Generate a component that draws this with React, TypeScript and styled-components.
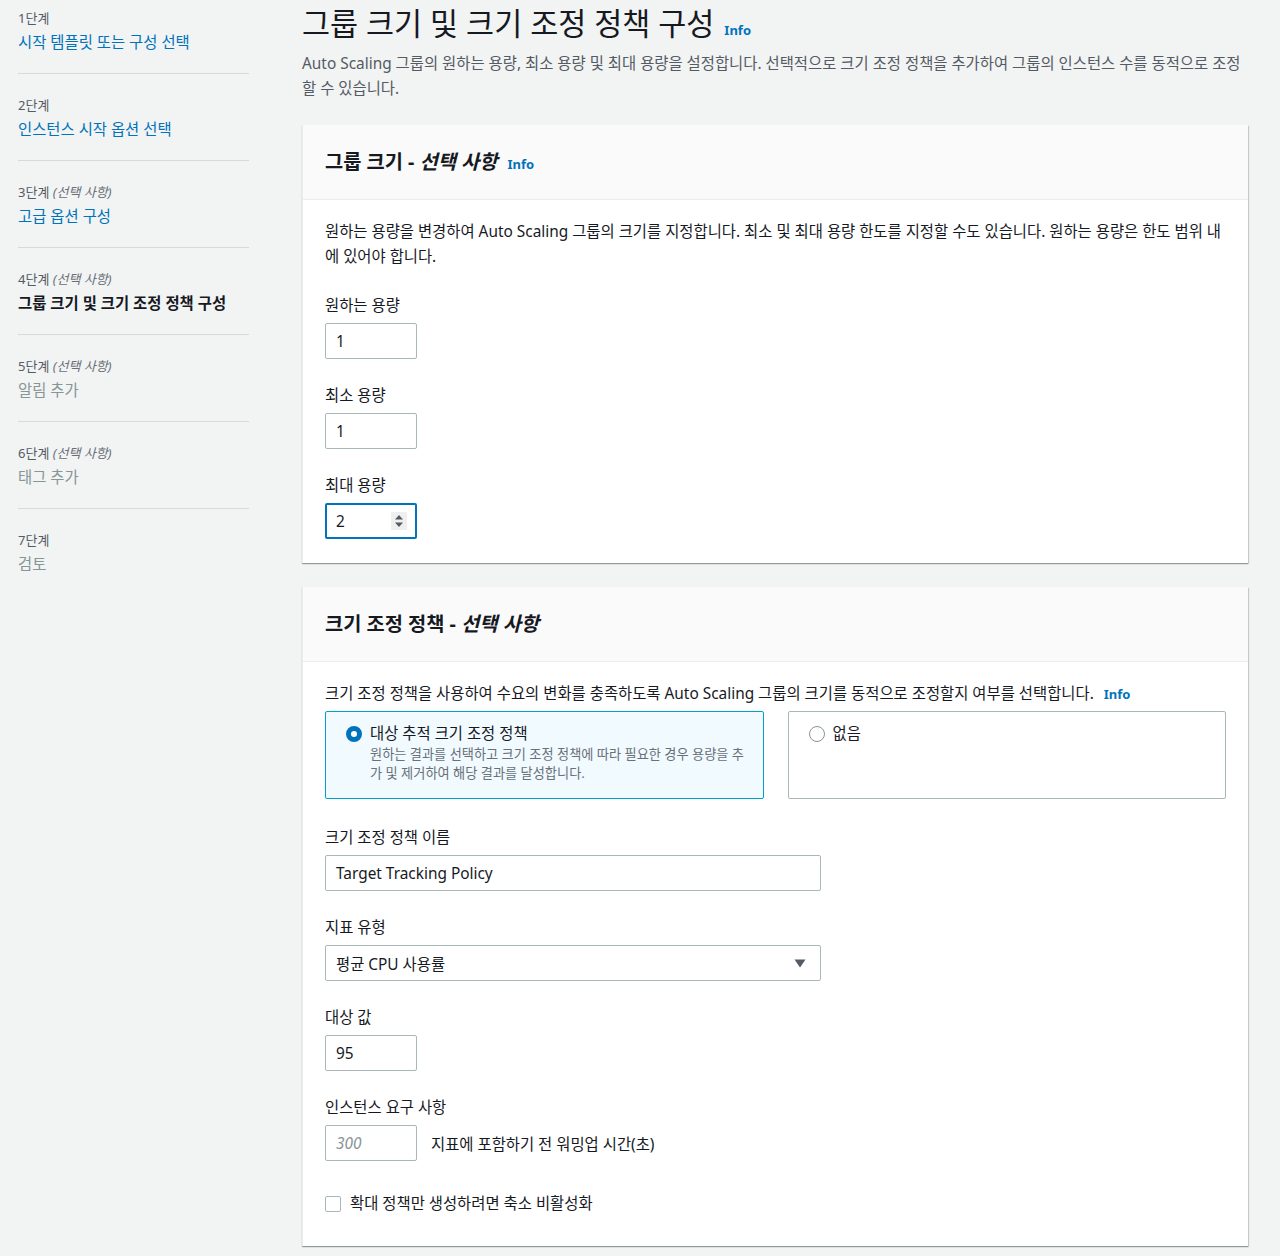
import styled, { createGlobalStyle } from 'styled-components';

const GlobalStyle = createGlobalStyle`
  body {
    margin: 0;
    background: #f2f3f3;
    font-family: "Noto Sans", "Noto Sans CJK KR", sans-serif;
    color: #16191f;
  }
`;

type Step = {
  num: string;
  optional?: boolean;
  title: string;
  state: 'link' | 'current' | 'disabled';
};

const steps: Step[] = [
  { num: '1단계', title: '시작 템플릿 또는 구성 선택', state: 'link' },
  { num: '2단계', title: '인스턴스 시작 옵션 선택', state: 'link' },
  { num: '3단계', optional: true, title: '고급 옵션 구성', state: 'link' },
  { num: '4단계', optional: true, title: '그룹 크기 및 크기 조정 정책 구성', state: 'current' },
  { num: '5단계', optional: true, title: '알림 추가', state: 'disabled' },
  { num: '6단계', optional: true, title: '태그 추가', state: 'disabled' },
  { num: '7단계', title: '검토', state: 'disabled' },
];

function SpinnerIcon() {
  return (
    <Spinner>
      <svg width="10" height="14" viewBox="0 0 10 14">
        <path d="M5 1 L9 5.5 H1 Z" fill="#545b64" />
        <path d="M5 13 L9 8.5 H1 Z" fill="#545b64" />
      </svg>
    </Spinner>
  );
}

function App() {
  return (
    <>
      <GlobalStyle />
      <Layout>
        <Sidebar>
          {steps.map((s, i) => (
            <StepItem key={s.num} last={i === steps.length - 1}>
              <StepNum>
                {s.num}
                {s.optional && <em> (선택 사항)</em>}
              </StepNum>
              <StepTitle state={s.state}>{s.title}</StepTitle>
            </StepItem>
          ))}
        </Sidebar>

        <Main>
          <TitleRow>
            <PageTitle>그룹 크기 및 크기 조정 정책 구성</PageTitle>
            <Info>Info</Info>
          </TitleRow>
          <PageDesc>
            Auto Scaling 그룹의 원하는 용량, 최소 용량 및 최대 용량을 설정합니다. 선택적으로 크기 조정 정책을 추가하여 그룹의 인스턴스 수를 동적으로 조정할 수 있습니다.
          </PageDesc>

          <Panel>
            <PanelHeader>
              <PanelTitle>
                그룹 크기 - <em>선택 사항</em>
              </PanelTitle>
              <Info>Info</Info>
            </PanelHeader>
            <PanelBody>
              <BodyText>
                원하는 용량을 변경하여 Auto Scaling 그룹의 크기를 지정합니다. 최소 및 최대 용량 한도를 지정할 수도 있습니다. 원하는 용량은 한도 범위 내에 있어야 합니다.
              </BodyText>
              <Field>
                <Label>원하는 용량</Label>
                <InputBox width={92}>1</InputBox>
              </Field>
              <Field>
                <Label>최소 용량</Label>
                <InputBox width={92}>1</InputBox>
              </Field>
              <Field>
                <Label>최대 용량</Label>
                <InputBox width={92} focused>
                  <span>2</span>
                  <SpinnerIcon />
                </InputBox>
              </Field>
            </PanelBody>
          </Panel>

          <Panel>
            <PanelHeader>
              <PanelTitle>
                크기 조정 정책 - <em>선택 사항</em>
              </PanelTitle>
            </PanelHeader>
            <PanelBody>
              <div>
                <BodyText>
                  크기 조정 정책을 사용하여 수요의 변화를 충족하도록 Auto Scaling 그룹의 크기를 동적으로 조정할지 여부를 선택합니다.
                  <Info inline>Info</Info>
                </BodyText>
                <Tiles>
                  <Tile selected>
                    <Radio checked />
                    <TileText>
                      <TileLabel>대상 추적 크기 조정 정책</TileLabel>
                      <TileDesc>
                        원하는 결과를 선택하고 크기 조정 정책에 따라 필요한 경우 용량을 추가 및 제거하여 해당 결과를 달성합니다.
                      </TileDesc>
                    </TileText>
                  </Tile>
                  <Tile>
                    <Radio />
                    <TileText>
                      <TileLabel>없음</TileLabel>
                    </TileText>
                  </Tile>
                </Tiles>
              </div>
              <Field spaced>
                <Label>크기 조정 정책 이름</Label>
                <InputBox width={496}>Target Tracking Policy</InputBox>
              </Field>
              <Field>
                <Label>지표 유형</Label>
                <InputBox width={496} select>
                  <span>평균 CPU 사용률</span>
                  <svg width="12" height="9" viewBox="0 0 12 9">
                    <path d="M0.5 0.5 H11.5 L6 8.5 Z" fill="#545b64" />
                  </svg>
                </InputBox>
              </Field>
              <Field>
                <Label>대상 값</Label>
                <InputBox width={92}>95</InputBox>
              </Field>
              <Field>
                <Label>인스턴스 요구 사항</Label>
                <InlineRow>
                  <InputBox width={92}>
                    <Placeholder>300</Placeholder>
                  </InputBox>
                  <InlineText>지표에 포함하기 전 워밍업 시간(초)</InlineText>
                </InlineRow>
              </Field>
              <CheckRow>
                <CheckBox />
                <span>확대 정책만 생성하려면 축소 비활성화</span>
              </CheckRow>
            </PanelBody>
          </Panel>
        </Main>
      </Layout>
    </>
  );
}

export default App;

const Layout = styled.div`
  display: flex;
  align-items: flex-start;
  padding: 0 32px 0 18px;
`;

const Sidebar = styled.nav`
  width: 231px;
  flex-shrink: 0;
  padding-top: 10px;
  margin-right: 53px;
`;

const StepItem = styled.div<{ last?: boolean }>`
  padding: 0 0 19px;
  margin-bottom: 23px;
  border-bottom: ${(p) => (p.last ? 'none' : '1px solid #d5dbdb')};
`;

const StepNum = styled.div`
  font-size: 13px;
  line-height: 17px;
  color: #545b64;
  em {
    font-style: italic;
    color: #687078;
  }
`;

const StepTitle = styled.div<{ state: Step['state'] }>`
  margin-top: 5px;
  font-size: 15.4px;
  line-height: 22px;
  font-weight: ${(p) => (p.state === 'current' ? 700 : 400)};
  color: ${(p) =>
    p.state === 'link' ? '#0073bb' : p.state === 'current' ? '#16191f' : '#879596'};
`;

const Main = styled.main`
  flex: 1;
  min-width: 0;
  padding-bottom: 40px;
`;

const TitleRow = styled.div`
  display: flex;
  align-items: baseline;
  gap: 10px;
  margin-top: 5px;
`;

const PageTitle = styled.h1`
  margin: 0;
  font-size: 30.5px;
  line-height: 36px;
  font-weight: 400;
  color: #16191f;
`;

const Info = styled.a<{ inline?: boolean }>`
  font-size: 13px;
  font-weight: 700;
  color: #0073bb;
  margin-left: ${(p) => (p.inline ? '10px' : '0')};
`;

const PageDesc = styled.p`
  margin: 10px 0 24px;
  font-size: 15.4px;
  line-height: 25px;
  color: #545b64;
`;

const Panel = styled.section`
  background: #fff;
  border-left: 1px solid #eaeded;
  box-shadow: 0 1px 1px 0 rgba(0, 28, 36, 0.3), 1px 1px 1px 0 rgba(0, 28, 36, 0.15);
  margin-bottom: 24px;
`;

const PanelHeader = styled.header`
  display: flex;
  align-items: baseline;
  gap: 10px;
  padding: 26px 22px 26px;
  background: #fafafa;
  border-bottom: 1px solid #eaeded;
`;

const PanelTitle = styled.h2`
  margin: 0;
  font-size: 19.8px;
  line-height: 22px;
  font-weight: 700;
  em {
    font-style: italic;
  }
`;

const PanelBody = styled.div`
  display: flex;
  flex-direction: column;
  gap: 26px;
  padding: 19px 22px 24px;
`;

const BodyText = styled.p`
  margin: 0;
  font-size: 15.4px;
  line-height: 25px;
  color: #16191f;
`;

const Field = styled.div<{ spaced?: boolean }>`
  display: flex;
  flex-direction: column;
  gap: 6px;
  margin-top: ${(p) => (p.spaced ? '2px' : '0')};
`;

const Label = styled.label`
  font-size: 15.4px;
  line-height: 22px;
  color: #16191f;
`;

const InputBox = styled.div<{ width: number; focused?: boolean; select?: boolean }>`
  box-sizing: border-box;
  width: ${(p) => p.width}px;
  height: 36px;
  display: flex;
  align-items: center;
  justify-content: space-between;
  padding: 0 ${(p) => (p.select ? '14px' : p.focused ? '9px' : '10px')} 0
    ${(p) => (p.focused ? '9px' : '10px')};
  border: ${(p) => (p.focused ? '2px solid #0073bb' : '1px solid #aab7b8')};
  border-radius: 2px;
  background: #fff;
  font-size: 15.4px;
  color: #16191f;
`;

const Spinner = styled.span`
  display: flex;
  align-items: center;
  justify-content: center;
  width: 16px;
  height: 18px;
  margin-right: -1px;
  background: #efefef;
`;

const Placeholder = styled.span`
  font-style: italic;
  color: #879596;
`;

const InlineRow = styled.div`
  display: flex;
  align-items: center;
  gap: 14px;
`;

const InlineText = styled.span`
  font-size: 15.4px;
  color: #16191f;
`;

const Tiles = styled.div`
  display: grid;
  grid-template-columns: 1fr 1fr;
  gap: 24px;
  margin-top: 4px;
`;

const Tile = styled.div<{ selected?: boolean }>`
  box-sizing: border-box;
  height: 88px;
  display: flex;
  align-items: flex-start;
  gap: 8px;
  padding: 11px 16px 0 20px;
  border: 1px solid ${(p) => (p.selected ? '#00a1c9' : '#aab7b8')};
  border-radius: 2px;
  background: ${(p) => (p.selected ? '#f1faff' : '#fff')};
`;

const Radio = styled.span<{ checked?: boolean }>`
  box-sizing: border-box;
  flex-shrink: 0;
  width: 16px;
  height: 16px;
  margin-top: 3px;
  border-radius: 50%;
  border: ${(p) => (p.checked ? '5px solid #0073bb' : '1.5px solid #879596')};
  background: #fff;
`;

const TileText = styled.div`
  display: flex;
  flex-direction: column;
`;

const TileLabel = styled.span`
  font-size: 15.4px;
  line-height: 22px;
  color: #16191f;
`;

const TileDesc = styled.span`
  font-size: 13.2px;
  line-height: 19px;
  color: #687078;
`;

const CheckRow = styled.label`
  display: flex;
  align-items: center;
  gap: 9px;
  margin-top: 6px;
  padding-bottom: 7px;
  font-size: 15.4px;
  line-height: 22px;
  color: #16191f;
`;

const CheckBox = styled.span`
  box-sizing: border-box;
  width: 16px;
  height: 16px;
  border: 1px solid #aab7b8;
  border-radius: 2px;
  background: #fff;
`;
